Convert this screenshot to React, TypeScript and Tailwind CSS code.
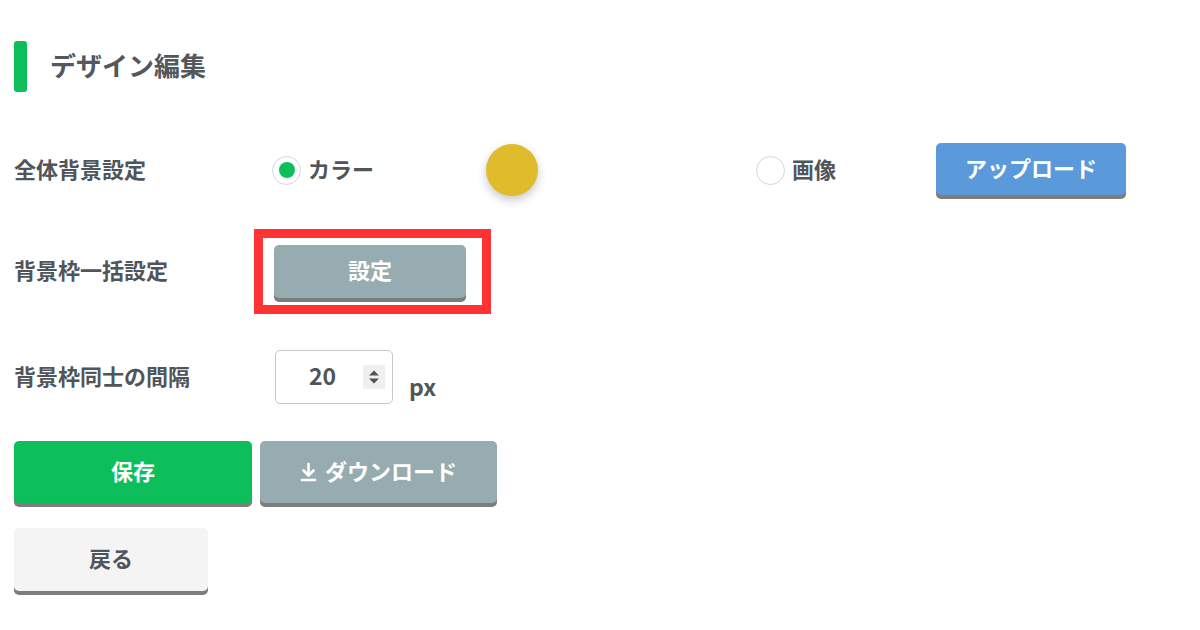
const font = { fontFamily: '"Noto Sans CJK JP", "Noto Sans", sans-serif' };

function Radio({ checked }: { checked?: boolean }) {
  return (
    <span className="w-[29px] h-[29px] rounded-full border-[1.5px] border-[#cfd7de] bg-white flex items-center justify-center shrink-0">
      {checked && <span className="w-[16px] h-[16px] rounded-full bg-[#0dbf5a]" />}
    </span>
  );
}

export default function App() {
  return (
    <div className="w-[1200px] h-[630px] bg-white pl-[14px] overflow-hidden text-[#50555a]" style={font}>

      {/* Title */}
      <div className="pt-[41px] flex items-center h-[92px]">
        <span className="w-[13px] h-[51px] rounded-[3px] bg-[#0dbf5a]" />
        <h1 className="ml-[23px] pb-[4px] text-[26px] font-bold leading-none text-[#53585d]">デザイン編集</h1>
      </div>

      {/* 全体背景設定 */}
      <div className="mt-[50px] h-[56px] flex items-center">
        <span className="w-[258px] pb-[4px] text-[22px] font-bold">全体背景設定</span>
        <label className="flex items-center gap-[7px] w-[214px]">
          <Radio checked />
          <span className="pb-[4px] text-[22px] font-bold">カラー</span>
        </label>
        <span className="w-[52px] h-[52px] rounded-full bg-[#e0bb2c] shadow-[0_4px_10px_rgba(0,0,0,0.22)]" />
        <label className="ml-[218px] flex items-center gap-[7px] w-[180px]">
          <Radio />
          <span className="pb-[4px] text-[22px] font-bold">画像</span>
        </label>
        <button className="-mt-[2px] pb-[4px] w-[190px] h-[52px] rounded-[5px] bg-[#5a9adb] text-white text-[22px] font-bold shadow-[0_4px_0_#7d7d7d]">
          アップロード
        </button>
      </div>

      {/* 背景枠一括設定 */}
      <div className="mt-[31px] flex items-center">
        <span className="w-[240px] pb-[4px] text-[22px] font-bold">背景枠一括設定</span>
        <div className="border-[9px] border-[#ff3333] pt-[7px] pl-[11px] pr-[16px] pb-[7px]">
          <button className="w-[192px] h-[53px] pb-[5px] rounded-[5px] bg-[#96acb0] text-white text-[22px] font-bold shadow-[0_4px_0_#7d7d7d]">
            設定
          </button>
        </div>
      </div>

      {/* 背景枠同士の間隔 */}
      <div className="mt-[36px] h-[54px] flex items-center">
        <span className="w-[261px] pb-[4px] text-[22px] font-bold">背景枠同士の間隔</span>
        <div className="w-[118px] h-[54px] rounded-[5px] border border-[#c8c8c8] flex items-center pl-[33px] pr-[7px]">
          <span className="pb-[3px] text-[23px] font-bold flex-1">20</span>
          <span className="w-[22px] h-[24px] bg-[#efefef] flex items-center justify-center">
            <svg width="12" height="16" viewBox="0 0 12 16">
              <path d="M6 1.5 L11 6.5 H1 Z" fill="#50555a" />
              <path d="M6 14.5 L11 9.5 H1 Z" fill="#50555a" />
            </svg>
          </span>
        </div>
        <span className="ml-[16px] mt-[18px] text-[23px] font-bold">px</span>
      </div>

      {/* Actions */}
      <div className="mt-[37px] flex gap-[8px]">
        <button className="w-[238px] h-[62px] pb-[4px] rounded-[5px] bg-[#0dbf5a] text-white text-[22px] font-bold shadow-[0_4px_0_#7d7d7d]">
          保存
        </button>
        <button className="w-[237px] h-[62px] pb-[4px] rounded-[5px] bg-[#96acb0] text-white text-[22px] font-bold shadow-[0_4px_0_#7d7d7d] flex items-center justify-center gap-[8px]">
          <svg width="17" height="20" viewBox="0 0 17 20" className="mt-[3px]" fill="none" stroke="white" strokeWidth="2.6" strokeLinecap="round" strokeLinejoin="round">
            <path d="M8.5 2 V13" />
            <path d="M3.5 8.5 L8.5 13.5 L13.5 8.5" />
            <path d="M2 18 H15" />
          </svg>
          ダウンロード
        </button>
      </div>
      <button className="mt-[25px] w-[194px] h-[63px] pb-[4px] rounded-[5px] bg-[#f4f4f4] text-[#50555a] text-[22px] font-bold shadow-[0_4px_0_#7d7d7d]">
        戻る
      </button>
    </div>
  );
}
